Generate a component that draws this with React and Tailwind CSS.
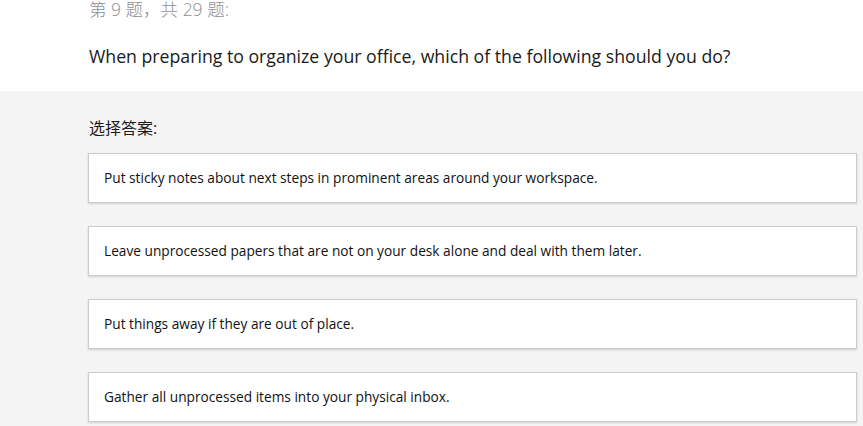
import React from 'react'

const answers = [
  'Put sticky notes about next steps in prominent areas around your workspace.',
  'Leave unprocessed papers that are not on your desk alone and deal with them later.',
  'Put things away if they are out of place.',
  'Gather all unprocessed items into your physical inbox.',
];

const App = () => {
  return (
    <div
      className="w-[863px] h-[426px] overflow-hidden bg-[#f4f4f4]"
      style={{ fontFamily: '"Segoe UI", "Open Sans", "Noto Sans CJK SC", sans-serif' }}
    >
      <div className="bg-white h-[91px] flex flex-col pl-[89px] pr-[6px]">
        <div className="-mt-[3px] text-[17.5px] leading-[24px] font-light text-[#8f8f8f]">第 9 题，共 29 题:</div>
        <div className="mt-[22px] text-[17.7px] leading-[26px] text-[#1a1a1a]">
          When preparing to organize your office, which of the following should you do?
        </div>
      </div>

      <div className="flex flex-col pl-[88px] pr-[6px] pt-[25px]">
        <div className="text-[16px] leading-[24px] text-[#1a1a1a] pl-[1px]">选择答案:</div>
        <div className="mt-[13px] flex flex-col gap-[23px]">
          {answers.map((a) => (
            <div
              key={a}
              className="h-[50px] flex items-center px-[15px] bg-white border border-[#cccccc] shadow-[0_1px_2px_rgba(0,0,0,0.15)] text-[13.7px] text-[#111] leading-[18px]"
            >
              {a}
            </div>
          ))}
        </div>
      </div>
    </div>
  )
}

export default App;
